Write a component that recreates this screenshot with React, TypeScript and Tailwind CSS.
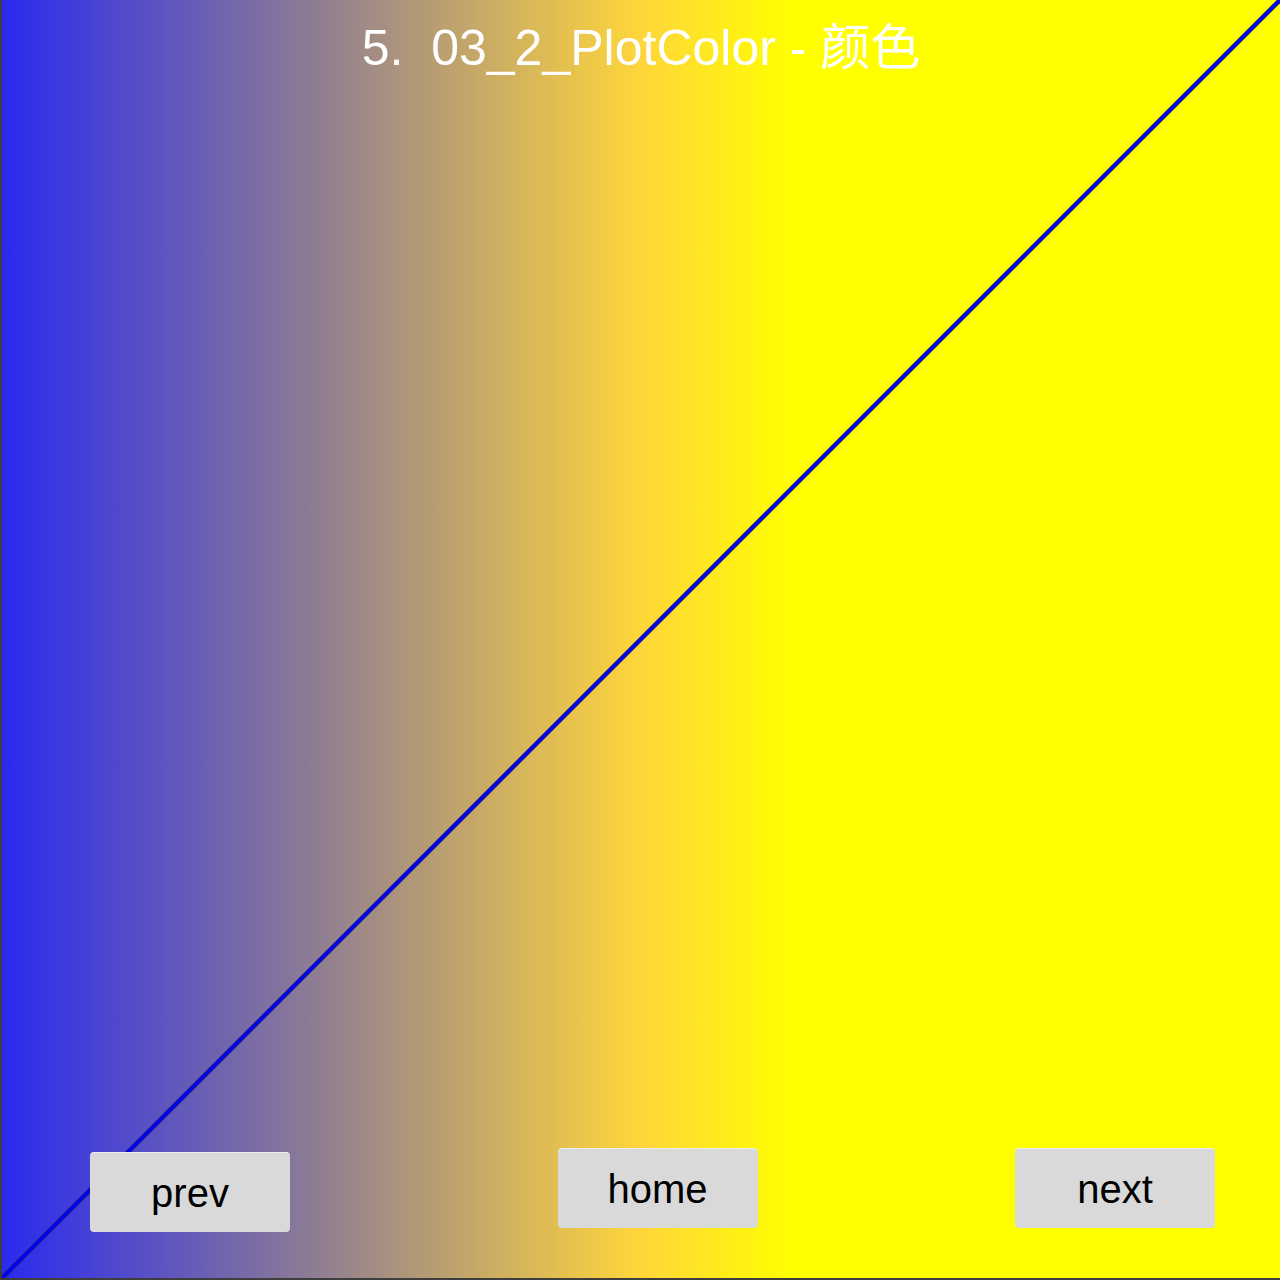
import React from "react";

const buttons = [
  { label: "prev", cls: "mt-[4px]" },
  { label: "home", cls: "ml-[10px]" },
  { label: "next", cls: "" },
];

function Diagonal() {
  return (
    <svg
      className="absolute inset-0 pointer-events-none"
      width="100%"
      height="100%"
      viewBox="0 0 1278 1278"
      preserveAspectRatio="none"
    >
      <line x1="0" y1="1278" x2="1278" y2="0" stroke="#1a1a78" strokeWidth="4.5" />
      <line x1="0" y1="1278" x2="1278" y2="0" stroke="#0000ff" strokeWidth="2.8" />
    </svg>
  );
}

export default function App() {
  return (
    <div className="w-[1280px] h-[1280px] bg-[#3e3e3e] pl-[2px] pb-[2px] font-['Liberation_Sans','Noto_Sans_CJK_SC',sans-serif]">
      <div className="relative h-full bg-[linear-gradient(to_right,#2a2aef_0%,#8c7b95_24%,#ffd63a_50%,#ffff00_62%,#ffff00_100%)] flex flex-col">
        <Diagonal />
        <h1 className="relative pt-[23px] text-center text-[50px] leading-none text-white whitespace-pre">
          5.  03_2_PlotColor - 颜色
        </h1>
        <div className="flex-1" />
        <div className="relative flex items-start justify-between pl-[88px] pr-[65px] pb-[46px]">
          {buttons.map(b => (
            <button
              key={b.label}
              className={`w-[200px] h-[80px] rounded-[4px] bg-[#d9d9d9] border-t border-[#eeeeee] text-[40px] leading-none text-black flex items-center justify-center ${b.cls}`}
            >
              {b.label}
            </button>
          ))}
        </div>
      </div>
    </div>
  );
}
